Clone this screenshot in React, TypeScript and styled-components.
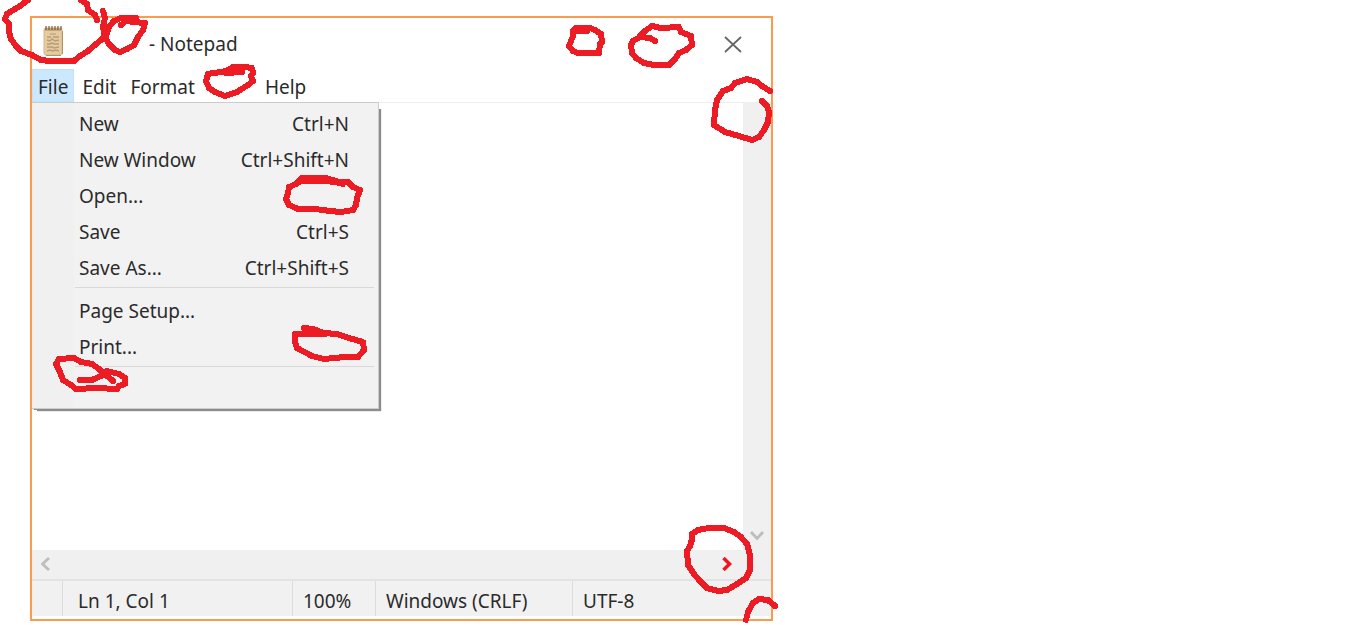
import React from "react";
import styled, { createGlobalStyle } from "styled-components";

const GlobalStyle = createGlobalStyle`
  * { box-sizing: border-box; }
  body {
    margin: 0;
    background: #fff;
    color: #2b2b2b;
    font-family: "Noto Sans", "Open Sans", sans-serif;
    font-size: 19px;
    line-height: 24px;
  }
  button, textarea { font: inherit; color: inherit; }
`;

const Page = styled.main`
  position: relative;
  display: flex;
  height: 100vh;
  padding: 16px 30px 8px;
  overflow: hidden;
`;

const Window = styled.section`
  display: flex;
  flex-direction: column;
  width: 100%;
  max-width: 743px;
  border: 2px solid #fb9b50;
  background: #fff;
`;

const TitleBar = styled.header`
  display: flex;
  align-items: center;
  height: 51px;
  padding: 0 20px 0 10px;
`;

const AppIcon = styled.svg`
  flex: none;
  margin-bottom: 5px;
`;

const Title = styled.h1`
  flex: 1;
  margin: 0 0 0 85px;
  font-size: 19px;
  font-weight: 400;
`;

const IconButton = styled.button`
  display: flex;
  align-items: center;
  justify-content: center;
  width: 36px;
  height: 28px;
  padding: 0;
  border: 0;
  background: transparent;
`;

const MenuBar = styled.nav`
  position: relative;
  display: flex;
  gap: 2px;
  height: 34px;
  border-bottom: 1px solid #eeeeee;
`;

const MenuButton = styled.button<{ $open?: boolean; $after?: boolean }>`
  margin-left: ${(p) => (p.$after ? "56px" : "0")};
  padding: 2px 5px 0;
  border: 1px solid ${(p) => (p.$open ? "#c2e2fb" : "transparent")};
  background: ${(p) => (p.$open ? "#cce8ff" : "transparent")};
`;

const Dropdown = styled.div`
  position: absolute;
  top: 33px;
  left: 0;
  z-index: 1;
  width: 347px;
  padding: 3px 4px 0 2px;
  border: 1px solid #cccccc;
  border-left: 0;
  background: linear-gradient(to right, #f0f0f0 42px, #f2f2f2 42px);
  box-shadow: 2px 2px 1px #8c8c8c;
  clip-path: polygon(0 0, 347px 0, 347px 7px, 352px 7px, 352px 312px, 5px 312px, 5px 308px, 0 308px);
`;

const MenuItem = styled.button`
  display: flex;
  align-items: center;
  justify-content: space-between;
  width: 100%;
  height: 36px;
  padding: 0 25px 0 45px;
  border: 0;
  background: transparent;
`;

const Separator = styled.hr`
  height: 1px;
  margin: 1px 0 5px 41px;
  border: 0;
  background: #d9d9d9;
`;

const Workspace = styled.div`
  display: flex;
  flex: 1;
  min-height: 0;
`;

const Editor = styled.textarea`
  flex: 1;
  min-width: 0;
  padding: 4px;
  border: 0;
  outline: 0;
  resize: none;
  background: #fff;
`;

const VerticalBar = styled.div`
  display: flex;
  align-items: flex-end;
  width: 28px;
  background: #f0f0f0;
`;

const HorizontalBar = styled.div`
  display: flex;
  align-items: center;
  justify-content: space-between;
  height: 29px;
  padding: 0 30px 1px 0;
  background: #f0f0f0;
`;

const ScrollButton = styled(IconButton)`
  width: 28px;
`;

const StatusBar = styled.footer`
  display: flex;
  height: 40px;
  padding-bottom: 3px;
  border-top: 2px solid #e3e3e3;
  background: linear-gradient(#f1f1f1 35px, #fff 35px);
`;

const StatusCell = styled.span<{ $width?: number; $pad?: number }>`
  width: ${(p) => (p.$width ? `${p.$width}px` : "auto")};
  flex: ${(p) => (p.$width ? "0 0 auto" : "1")};
  padding: 8px 0 0 ${(p) => p.$pad ?? 10}px;
  border-right: ${(p) => (p.$width ? "1px solid #dcdcdc" : "0")};
`;

const Markup = styled.svg`
  position: absolute;
  top: 0;
  left: 0;
  z-index: 2;
  overflow: visible;
  pointer-events: none;
`;

const NotepadIcon = () => (
  <AppIcon width="22" height="32" viewBox="0 0 22 32" aria-hidden="true">
    <rect x="2" y="3" width="18" height="27" rx="2" fill="#e6cba0" stroke="#d3b78a" />
    <path d="M3 3h16v3H3z" fill="#c9a775" />
    <path d="M4 1v4M7 1v4M10 1v4M13 1v4M16 1v4M19 1v4" stroke="#7d5a40" strokeWidth="1.2" />
    <path d="M8 9h6" stroke="#b39a72" />
    <path
      d="M5 12h4M11 12h6M5 15l3 1 2-2 3 2 4-1M5 19h3l2-1 2 1h5M5 22h5l2 1 5-1M5 26l3-1 3 1 3-1 3 1"
      fill="none"
      stroke="#b59d76"
      strokeWidth="1.4"
    />
    <path d="M20.500 6v23M4 30.500h15" stroke="#b0946a" />
  </AppIcon>
);

const marks = [
  "M28 0L20 6L10 12L7 14L5 19L9 24L9 32L11 39L16 46L21 51L32 55L41 60L50 61L74 61L80 56L88 51L95 45L101 40L104 36",
  "M81 0L87 4L88 10L95 15L97 20",
  "M103 11L105 18L103 27L105 37L109 44L115 50L120 52L127 49L134 45L138 37L143 30L145 23L134 22L126 21L121 25",
  "M106 36L109 27L114 21L121 18L136 18",
  "M208 74L206 81L209 88L215 92L225 96L237 92L248 85L253 81L251 76L253 73L252 68L245 67L233 67L228 70L222 72L213 73Z",
  "M226 73L242 72",
  "M587 31L574 31L573 36L571 41L569 46L573 51L578 53L599 53L600 44L602 42L601 34L595 30L590 28L576 28L573 31",
  "M655 41L650 38L640 37L633 41L631 45L632 53L636 58L644 63L654 65L669 65L675 59L679 53L686 50L692 45L691 36L681 32L679 27L661 28L652 26L645 31L640 36",
  "M770 91L762 86L757 82L747 79L735 83L731 88L723 91L717 100L715 110L714 125L725 132L739 136L752 140L759 137L764 130L768 122L769 112L767 106L762 101",
  "M343 184L335 182L326 181L301 181L296 184L289 187L288 193L286 199L289 205L298 209L315 209L330 211L341 212L353 210L356 205L357 198L360 190L353 187L348 182L339 182L326 178L302 178L296 184",
  "M304 328L313 329L324 333L337 334L349 338L363 342L364 350L358 357L345 357L324 359L312 356L297 348L295 342L295 334L325 334",
  "M80 380L92 380L101 376L107 371L119 374L125 378L125 384L119 386L117 389L96 388L76 389L71 385L63 380L60 372L56 364L59 359L74 358L81 362L92 364L99 369L106 375L113 381",
  "M692 539L690 546L687 551L688 565L694 574L700 581L707 588L718 591L727 590L737 584L746 578L750 570L750 555L747 544L741 537L734 532L724 528L709 528L698 530L692 534L692 540",
  "M746 620L748 612L753 603L759 599L768 600L775 606",
];

const fileMenu: (null | [string, string])[] = [
  ["New", "Ctrl+N"],
  ["New Window", "Ctrl+Shift+N"],
  ["Open...", ""],
  ["Save", "Ctrl+S"],
  ["Save As...", "Ctrl+Shift+S"],
  null,
  ["Page Setup...", ""],
  ["Print...", ""],
  null,
  ["", ""],
];

export default function App() {
  return (
    <Page>
      <GlobalStyle />
      <Window>
        <TitleBar>
          <NotepadIcon />
          <Title>- Notepad</Title>
          <IconButton aria-label="Close">
            <svg width="18" height="18" viewBox="0 0 18 18" aria-hidden="true">
              <path d="M1 2L17 17M17 2L1 17" stroke="#666" strokeWidth="1.8" />
            </svg>
          </IconButton>
        </TitleBar>
        <MenuBar>
          <MenuButton $open>File</MenuButton>
          <MenuButton>Edit</MenuButton>
          <MenuButton>Format</MenuButton>
          <MenuButton $after>Help</MenuButton>
          <Dropdown>
            {fileMenu.map((item, i) =>
              item ? (
                <MenuItem key={i} aria-label={item[0] || "Menu item"}>
                  <span>{item[0]}</span>
                  <span>{item[1]}</span>
                </MenuItem>
              ) : (
                <Separator key={i} />
              )
            )}
          </Dropdown>
        </MenuBar>
        <Workspace>
          <Editor aria-label="Document" />
          <VerticalBar>
            <ScrollButton aria-label="Scroll down">
              <svg width="14" height="10" viewBox="0 0 14 10" aria-hidden="true">
                <path d="M1 1L7 7.500L13 1" fill="none" stroke="#bdbdbd" strokeWidth="2.800" />
              </svg>
            </ScrollButton>
          </VerticalBar>
        </Workspace>
        <HorizontalBar>
          <ScrollButton aria-label="Scroll left">
            <svg width="10" height="14" viewBox="0 0 10 14" aria-hidden="true">
              <path d="M8 1L1.500 7L8 13" fill="none" stroke="#bdbdbd" strokeWidth="2.800" />
            </svg>
          </ScrollButton>
          <ScrollButton aria-label="Scroll right">
            <svg width="12" height="14" viewBox="0 0 12 14" aria-hidden="true">
              <path d="M2.500 1L8.500 7L2.500 13" fill="none" stroke="#f0141e" strokeWidth="3.500" />
            </svg>
          </ScrollButton>
        </HorizontalBar>
        <StatusBar>
          <StatusCell $width={31} />
          <StatusCell $width={230} $pad={15}>Ln 1, Col 1</StatusCell>
          <StatusCell $width={83}>100%</StatusCell>
          <StatusCell $width={197}>Windows (CRLF)</StatusCell>
          <StatusCell>UTF-8</StatusCell>
        </StatusBar>
      </Window>
      <Markup
        width="780"
        height="629"
        fill="none"
        stroke="#ed1c24"
        strokeWidth="6"
        strokeLinejoin="round"
        strokeLinecap="round"
        shapeRendering="crispEdges"
        aria-hidden="true"
      >
        {marks.map((d) => (
          <path key={d} d={d} />
        ))}
      </Markup>
    </Page>
  );
}
